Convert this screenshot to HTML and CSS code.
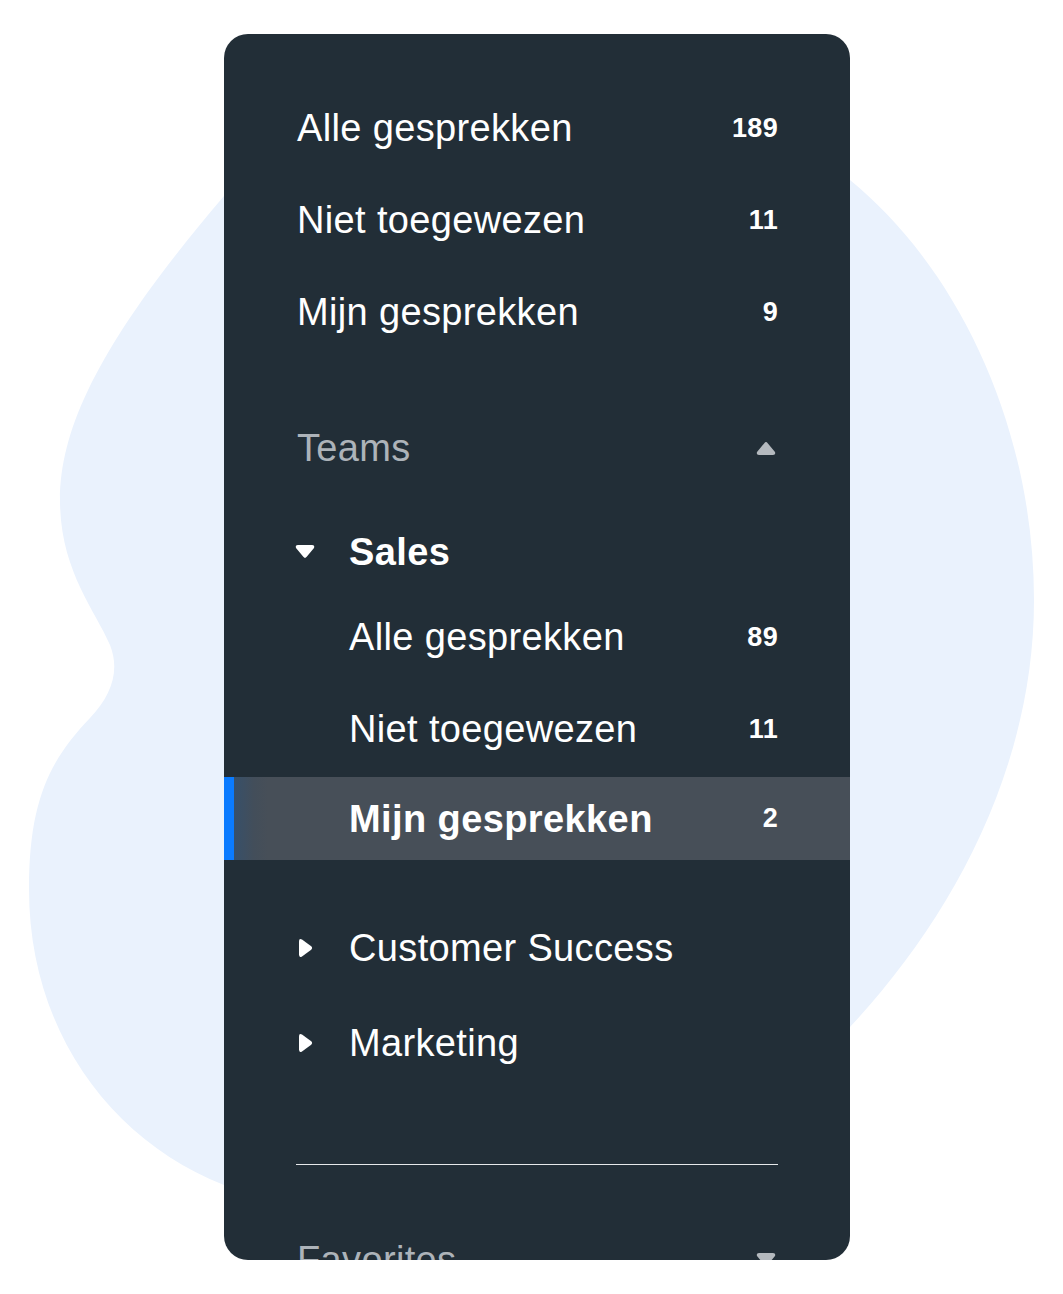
FILE: index.html
```html
<!DOCTYPE html>
<html lang="nl">
<head>
<meta charset="utf-8">
<title>Inbox navigatie</title>
<link rel="stylesheet" href="styles.css">
</head>
<body>
<div class="stage">
  <svg class="blob" width="1063" height="1294" viewBox="0 0 1063 1294" aria-hidden="true">
    <path d="M224 196 C420 40 700 60 850 180 C960 270 1034 430 1034 600 C1034 770 950 920 850 1027 C700 1180 400 1230 224 1185 C110 1140 29 1030 29 889 C29 800 50 760 90 718 C112 695 120 670 110 645 C95 610 60 570 60 500 C60 420 110 330 224 196 Z" fill="#EAF2FD"/>
  </svg>
  <nav class="card">
    <div class="row top"><span class="label">Alle gesprekken</span><span class="count">189</span></div>
    <div class="row top"><span class="label">Niet toegewezen</span><span class="count">11</span></div>
    <div class="row top"><span class="label">Mijn gesprekken</span><span class="count">9</span></div>

    <div class="row section"><span class="label muted">Teams</span>
      <svg class="caret" width="20" height="14" viewBox="0 0 20 14"><path d="M8.3 2.2 Q10 0 11.7 2.2 L19 11 Q20 14 17 14 L3 14 Q0 14 1 11 Z" fill="#B4B9BE"/></svg>
    </div>

    <div class="row team open">
      <svg class="tri" width="20" height="14" viewBox="0 0 20 14"><path d="M8.3 11.8 Q10 14 11.7 11.8 L19 3 Q20 0 17 0 L3 0 Q0 0 1 3 Z" fill="#FFFFFF"/></svg>
      <span class="label bold">Sales</span>
    </div>
    <div class="row sub"><span class="label">Alle gesprekken</span><span class="count">89</span></div>
    <div class="row sub"><span class="label">Niet toegewezen</span><span class="count">11</span></div>
    <div class="row sub active"><span class="label bold">Mijn gesprekken</span><span class="count">2</span></div>

    <div class="row team closed first">
      <svg class="tri" width="20" height="18" viewBox="0 0 20 18"><path d="M14.2 7.3 Q16 9 14.2 10.7 L5 17.4 Q2 19 2 15.5 L2 2.5 Q2 -1 5 0.6 Z" fill="#FFFFFF"/></svg>
      <span class="label">Customer Success</span>
    </div>
    <div class="row team closed">
      <svg class="tri" width="20" height="18" viewBox="0 0 20 18"><path d="M14.2 7.3 Q16 9 14.2 10.7 L5 17.4 Q2 19 2 15.5 L2 2.5 Q2 -1 5 0.6 Z" fill="#FFFFFF"/></svg>
      <span class="label">Marketing</span>
    </div>

    <div class="divider"></div>

    <div class="row section fav"><span class="label muted">Favorites</span>
      <svg class="caret" width="20" height="14" viewBox="0 0 20 14"><path d="M8.3 11.8 Q10 14 11.7 11.8 L19 3 Q20 0 17 0 L3 0 Q0 0 1 3 Z" fill="#B4B9BE"/></svg>
    </div>
  </nav>
</div>
</body>
</html>
```

FILE: styles.css
```css
* { box-sizing: border-box; }

html, body {
  margin: 0;
  padding: 0;
  background: #FFFFFF;
}

body {
  font-family: "Liberation Sans", Arial, Helvetica, sans-serif;
  color: #FFFFFF;
}

.stage {
  position: relative;
  width: 1063px;
  height: 1294px;
  padding: 34px 0 0 224px;
  overflow: hidden;
}

.blob {
  position: absolute;
  left: 0;
  top: 0;
}

.card {
  position: relative;
  width: 626px;
  height: 1226px;
  background: #222E37;
  border-radius: 24px;
  overflow: hidden;
  padding-top: 48px;
  display: flex;
  flex-direction: column;
}

.row {
  display: flex;
  align-items: center;
  justify-content: space-between;
  padding: 0 72px 0 73px;
  flex-shrink: 0;
}

.label {
  font-size: 38px;
  line-height: 1;
  letter-spacing: 0.35px;
  white-space: nowrap;
}

.label.bold { font-weight: 700; letter-spacing: 0.4px; }

.label.muted { color: #ADB3B9; }

.count {
  font-size: 27px;
  font-weight: 700;
  line-height: 1;
  letter-spacing: 0.3px;
}

.row.top { height: 92px; }

.row.section {
  height: 92px;
  margin-top: 44px;
}

.caret { margin-right: 2px; }

.row.team {
  justify-content: flex-start;
  padding-left: 71px;
  gap: 34px;
}

.row.team.open {
  height: 78px;
  margin-top: 19px;
}

.row.team.closed { height: 95px; }

.row.team.closed .tri { margin-left: 2px; margin-right: -2px; }

.row.team.first { margin-top: 40px; }

.row.sub {
  height: 92px;
  padding-left: 125px;
}

.row.sub.active {
  height: 83px;
  margin-top: 2px;
  background: linear-gradient(90deg, #0A7BFF 0, #0A7BFF 10px, #37506A 10px, #434E5A 30px, #474F58 44px, #474F58 100%);
}

.divider {
  flex-shrink: 0;
  height: 1px;
  margin: 74px 72px 0 72px;
  background: #E6E8EA;
}

.row.fav { margin-top: 49px; }
```
